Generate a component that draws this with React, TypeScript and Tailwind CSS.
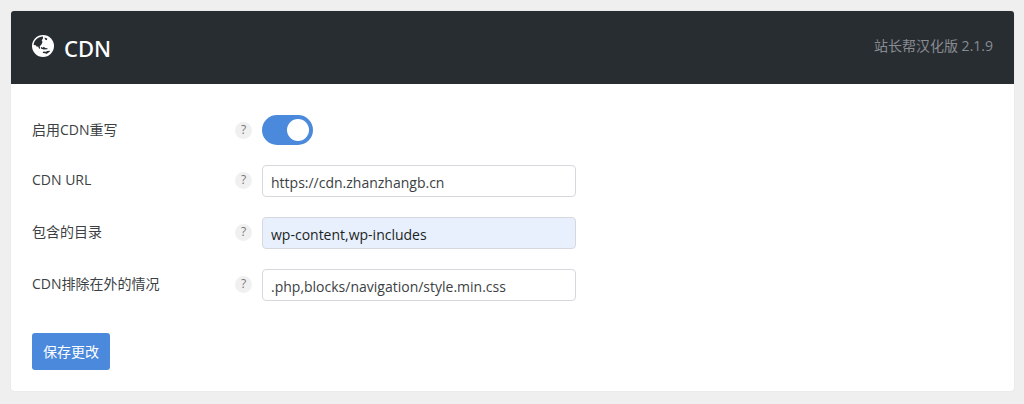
import { useState } from "react";

type Field = { id: string; label: string; value: string; filled?: boolean };

const fields: Field[] = [
  { id: "cdn-url", label: "CDN URL", value: "https://cdn.zhanzhangb.cn" },
  { id: "cdn-dirs", label: "包含的目录", value: "wp-content,wp-includes", filled: true },
  { id: "cdn-exclusions", label: "CDN排除在外的情况", value: ".php,blocks/navigation/style.min.css" },
];

function GlobeIcon() {
  return (
    <svg className="mb-1 size-[22px]" viewBox="0 0 23 23" aria-hidden="true">
      <circle cx="11.5" cy="11.5" r="11.5" fill="#fff" />
      <path
        fill="#282d32"
        d="M11.500 1.700C6.500 1.600 2.200 5.500 1.700 10.500l2.300.2 1 1.700 1.500-.3.800 2.200 1.200-.2-.4-2.400 1.800-1.800 1.100-2.600-.9-1.800 1.300-1.600zM13 2.500l.7 2.200 1.800.8.5-1.800zM9.200 12.300l.4 2.200 2.600.6 3.800-.2.300-1.100-2.600-.1-1.200-1.300-1.400.9zM12 17.300l-1 1.400 2.900.3 1.200.8 3.400-2.200.3-1.100-2.800.2-1.400.9z"
      />
    </svg>
  );
}

function LabelCell({ id, label }: { id: string; label: string }) {
  return (
    <div className="flex h-[30px] w-[220px] shrink-0 items-center justify-between">
      <label htmlFor={id}>{label}</label>
      <button
        type="button"
        aria-label={`${label} ?`}
        className="flex size-[17px] items-center justify-center rounded-full bg-[#f0f0f0] text-xs text-[#777]"
      >
        ?
      </button>
    </div>
  );
}

export default function App() {
  const [enabled, setEnabled] = useState(true);
  return (
    <div className="min-h-screen bg-[#efefef] p-[11px] pr-[10px] font-['Open_Sans','Noto_Sans_CJK_SC',sans-serif] text-sm leading-5 text-[#3c3f43]">
      <main className="overflow-hidden rounded-[3px] bg-white shadow-[0_0_1px_#ccc]">
        <header className="flex h-[73px] items-center justify-between bg-[#282d32] px-[21px]">
          <h1 className="flex items-center gap-[10px] font-['Noto_Sans',sans-serif] text-[22px] font-medium leading-8 text-white">
            <GlobeIcon />
            CDN
          </h1>
          <span className="pb-1 text-[#888c91]">站长帮汉化版 2.1.9</span>
        </header>
        <form className="px-[21px] pt-[31px] pb-[21px]" onSubmit={(e) => e.preventDefault()}>
          <div className="flex items-start gap-[10px]">
            <LabelCell id="cdn-enabled" label="启用CDN重写" />
            <input
              id="cdn-enabled"
              type="checkbox"
              role="switch"
              checked={enabled}
              onChange={(e) => setEnabled(e.target.checked)}
              className="flex h-[30px] w-[51px] cursor-pointer appearance-none items-center rounded-full bg-[#ccc] px-1 before:block before:size-[22px] before:rounded-full before:bg-white checked:justify-end checked:bg-[#4a89dc]"
            />
          </div>
          <div className="mt-5 grid gap-5">
            {fields.map((f) => (
              <div key={f.id} className="flex items-start gap-[10px]">
                <LabelCell id={f.id} label={f.label} />
                <input
                  id={f.id}
                  type="text"
                  defaultValue={f.value}
                  className={`h-8 w-full max-w-[314px] rounded border border-[#d5d8dc] px-2 pt-0.5 ${
                    f.filled ? "bg-[#e8f0fe] text-[#1c1f23]" : "bg-white"
                  }`}
                />
              </div>
            ))}
          </div>
          <button
            type="submit"
            className="mt-8 block h-[37px] rounded-[3px] bg-[#4a89dc] px-[11px] text-white"
          >
            保存更改
          </button>
        </form>
      </main>
    </div>
  );
}
